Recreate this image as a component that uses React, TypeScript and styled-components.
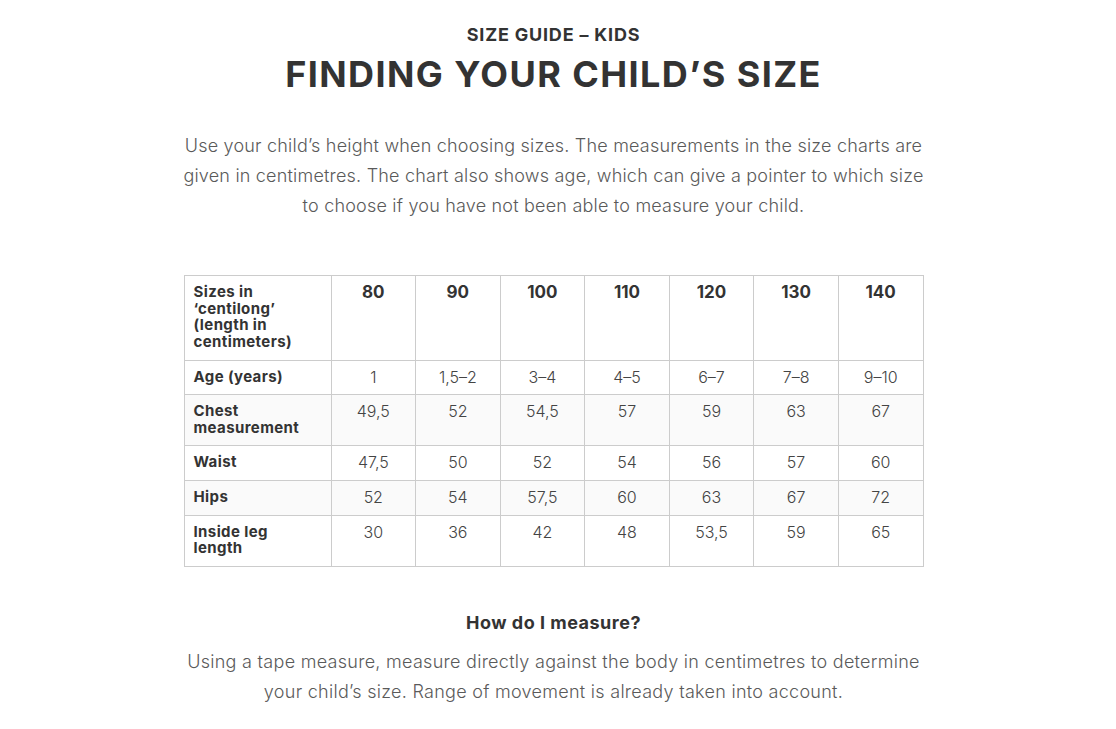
import React from "react";
import styled, { createGlobalStyle } from "styled-components";

const Global = createGlobalStyle`
  html, body { margin: 0; padding: 0; background: #fff; }
  body { font-family: Inter, "Open Sans", sans-serif; color: #333; }
`;

const Page = styled.div`
  width: 1107px;
  display: flex;
  justify-content: center;
  padding-top: 25px;
`;

const Column = styled.div`
  width: 740px;
  display: flex;
  flex-direction: column;
  align-items: center;
  text-align: center;
`;

const Kicker = styled.h2`
  margin: 0;
  font-size: 18px;
  line-height: 20px;
  font-weight: 700;
  letter-spacing: 0.8px;
  color: #333;
  text-transform: uppercase;
`;

const Title = styled.h1`
  margin: 7px 0 0;
  font-size: 36px;
  line-height: 44px;
  font-weight: 700;
  color: #333;
  letter-spacing: 1.4px;
`;

const Lead = styled.p`
  margin: 35px 0 0;
  font-size: 18px;
  line-height: 30px;
  font-weight: 300;
  letter-spacing: 0.2px;
  color: #5a5a5a;
  white-space: nowrap;
`;

const Table = styled.table`
  margin-top: 54px;
  width: 740px;
  border-collapse: collapse;
  table-layout: fixed;
  font-size: 15px;
  line-height: 16.67px;
  color: #333;
`;

const Row = styled.tr<{ $shade?: boolean }>`
  background: ${(p) => (p.$shade ? "#fafafa" : "#fff")};
`;

const Cell = styled.td<{ $label?: boolean; $head?: boolean }>`
  border: 1px solid #ccc;
  padding: 8px 9px 8.9px;
  vertical-align: top;
  text-align: ${(p) => (p.$label ? "left" : "center")};
  font-weight: ${(p) => (p.$label || p.$head ? 700 : 300)};
  font-size: ${(p) => (p.$label ? "15px" : p.$head ? "17px" : "16px")};
  letter-spacing: ${(p) => (p.$label ? "0.4px" : "0")};
  color: ${(p) => (p.$label || p.$head ? "#333" : "#444")};
`;

const SubTitle = styled.h3`
  margin: 45px 0 0;
  font-size: 18px;
  line-height: 22px;
  font-weight: 700;
  letter-spacing: 0.5px;
  color: #333;
`;

const Foot = styled.p`
  margin: 13px 0 0;
  font-size: 18px;
  line-height: 30px;
  font-weight: 300;
  letter-spacing: 0.28px;
  color: #5a5a5a;
  white-space: nowrap;
`;

const sizes = ["80", "90", "100", "110", "120", "130", "140"];
const rows: { label: React.ReactNode; key: string; values: string[] }[] = [
  { key: "age", label: "Age (years)", values: ["1", "1,5–2", "3–4", "4–5", "6–7", "7–8", "9–10"] },
  {
    key: "chest",
    label: (
      <>
        Chest
        <br />
        measurement
      </>
    ),
    values: ["49,5", "52", "54,5", "57", "59", "63", "67"],
  },
  { key: "waist", label: "Waist", values: ["47,5", "50", "52", "54", "56", "57", "60"] },
  { key: "hips", label: "Hips", values: ["52", "54", "57,5", "60", "63", "67", "72"] },
  {
    key: "leg",
    label: (
      <>
        Inside leg
        <br />
        length
      </>
    ),
    values: ["30", "36", "42", "48", "53,5", "59", "65"],
  },
];

export default function App() {
  return (
    <>
      <Global />
      <Page>
        <Column>
          <Kicker>Size guide – kids</Kicker>
          <Title>FINDING YOUR CHILD’S SIZE</Title>
          <Lead>
            Use your child’s height when choosing sizes. The measurements in the size charts are
            <br />
            given in centimetres. The chart also shows age, which can give a pointer to which size
            <br />
            to choose if you have not been able to measure your child.
          </Lead>
          <Table>
            <colgroup>
              <col style={{ width: 147 }} />
              {sizes.map((s) => (
                <col key={s} />
              ))}
            </colgroup>
            <tbody>
              <Row>
                <Cell $label>
                  Sizes in
                  <br />
                  ‘centilong’
                  <br />
                  (length in
                  <br />
                  centimeters)
                </Cell>
                {sizes.map((s) => (
                  <Cell key={s} $head>
                    {s}
                  </Cell>
                ))}
              </Row>
              {rows.map((r, i) => (
                <Row key={r.key} $shade={i % 2 === 1}>
                  <Cell $label>{r.label}</Cell>
                  {r.values.map((v, j) => (
                    <Cell key={j}>{v}</Cell>
                  ))}
                </Row>
              ))}
            </tbody>
          </Table>
          <SubTitle>How do I measure?</SubTitle>
          <Foot>
            Using a tape measure, measure directly against the body in centimetres to determine
            <br />
            your child’s size. Range of movement is already taken into account.
          </Foot>
        </Column>
      </Page>
    </>
  );
}
